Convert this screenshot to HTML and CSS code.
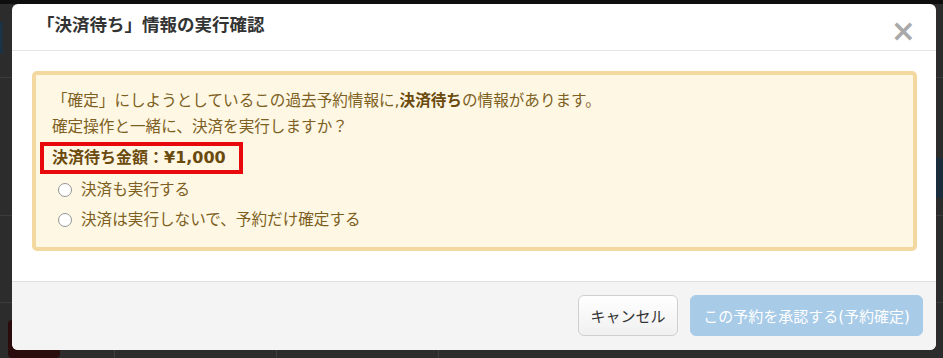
FILE: index.html
```html
<!DOCTYPE html>
<html lang="ja">

<head>
  <meta charset="UTF-8">
  <meta name="viewport" content="width=device-width, initial-scale=1.0">
  <title>「決済待ち」情報の実行確認</title>
  <link rel="stylesheet" href="styles.css">
</head>

<body>
  <div class="backdrop">
    <div class="bg-top"></div>
    <div class="bg-tab"></div>
    <div class="bg-line bg-line-1"></div>
    <div class="bg-line bg-line-2"></div>
    <div class="bg-line bg-line-3"></div>
    <div class="bg-side"></div>
    <div class="bg-red"></div>
    <div class="bg-col bg-col-1"></div>
    <div class="bg-col bg-col-2"></div>
    <div class="bg-col bg-col-3"></div>
  </div>

  <div class="modal">
    <div class="modal-header">
      <h4 class="modal-title">「決済待ち」情報の実行確認</h4>
      <span class="close">&times;</span>
    </div>

    <div class="modal-body">
      <div class="alert">
        <p class="line">「確定」にしようとしているこの過去予約情報に,<b>決済待ち</b>の情報があります。</p>
        <p class="line">確定操作と一緒に、決済を実行しますか？</p>
        <div class="amount"><b>決済待ち金額：¥1,000</b></div>
        <label class="option first"><span class="radio"></span>決済も実行する</label>
        <label class="option"><span class="radio"></span>決済は実行しないで、予約だけ確定する</label>
      </div>
    </div>

    <div class="modal-footer">
      <button type="button" class="btn btn-default">キャンセル</button>
      <button type="button" class="btn btn-primary">この予約を承認する(予約確定)</button>
    </div>
  </div>
</body>

</html>
```

FILE: styles.css
```css
body {
  margin: 0;
  padding: 0;
  width: 943px;
  height: 358px;
  overflow: hidden;
  background-color: #2c2c2c;
  font-family: "DejaVu Sans", "Noto Sans CJK JP", sans-serif;
  position: relative;
}

/* page behind the overlay */
.backdrop div {
  position: absolute;
}

.bg-top {
  left: 0;
  top: 0;
  width: 943px;
  height: 4px;
  background-color: #0e0e0e;
}

.bg-tab {
  left: 0;
  top: 22px;
  width: 3px;
  height: 32px;
  background-color: #1d3344;
}

.bg-line {
  left: 0;
  width: 943px;
  height: 1px;
  background-color: #3c3c3c;
}

.bg-line-1 { top: 77px; }
.bg-line-2 { top: 215px; }
.bg-line-3 { top: 302px; }

.bg-side {
  left: 936px;
  top: 158px;
  width: 7px;
  height: 40px;
  background-color: #1b2c3c;
}

.bg-red {
  left: 8px;
  top: 320px;
  width: 52px;
  height: 38px;
  border-radius: 4px;
  background-color: #2a0c0c;
}

.bg-col {
  top: 350px;
  width: 1px;
  height: 8px;
  background-color: #3e3e3e;
}

.bg-col-1 { left: 114px; }
.bg-col-2 { left: 276px; }
.bg-col-3 { left: 438px; }

/* dialog */
.modal {
  position: absolute;
  left: 12px;
  top: 4px;
  width: 924px;
  height: 346px;
  background-color: #ffffff;
  border-radius: 6px;
  display: flex;
  flex-direction: column;
  overflow: hidden;
}

.modal-header {
  height: 47px;
  box-sizing: border-box;
  border-bottom: 1px solid #e5e5e5;
  display: flex;
  justify-content: space-between;
  padding: 0 20px 0 25px;
}

.modal-title {
  margin: 0;
  padding-top: 9px;
  font-size: 17.5px;
  line-height: 24px;
  font-weight: bold;
  color: #333333;
}

.close {
  margin-top: 15px;
  font-size: 30px;
  line-height: 24px;
  font-weight: bold;
  color: #a9a9a9;
}

.modal-body {
  flex: 1;
  padding: 20px 19px 0 20px;
}

.alert {
  background-color: #fdf7e4;
  border: 4px solid #f3d89f;
  border-radius: 5px;
  color: #7e5f22;
  padding: 13px 16px 12px 16px;
  font-size: 15.6px;
}

.alert b {
  color: #6b4a0e;
}

.line {
  margin: 0;
  line-height: 26px;
}

.amount {
  margin: 2px 0 0 -12px;
  width: 203px;
  height: 32px;
  box-sizing: border-box;
  border: 4px solid #e8090c;
  padding-left: 8px;
  font-size: 16px;
  line-height: 24px;
}

.option {
  display: flex;
  align-items: center;
  line-height: 30px;
  padding-left: 6px;
}

.option.first {
  margin-top: 1px;
}

.radio {
  flex-shrink: 0;
  width: 12px;
  height: 12px;
  border: 1px solid #959595;
  border-radius: 50%;
  background-color: #ffffff;
  margin-right: 9px;
}

.modal-footer {
  height: 69px;
  box-sizing: border-box;
  border-top: 1px solid #e0e0e0;
  background-color: #f4f4f4;
  display: flex;
  justify-content: flex-end;
  align-items: flex-start;
  gap: 12px;
  padding: 13px 13px 0 0;
}

.btn {
  height: 41px;
  font-family: "DejaVu Sans", "Noto Sans CJK JP", sans-serif;
  font-size: 15px;
  border-radius: 6px;
  padding: 0;
}

.btn-default {
  width: 100px;
  background: linear-gradient(#ffffff, #f0f0f0);
  border: 1px solid #cfcfcf;
  color: #333333;
}

.btn-primary {
  width: 233px;
  background-color: #a8cbe8;
  border: 1px solid #a8cbe8;
  color: #ffffff;
}
```
